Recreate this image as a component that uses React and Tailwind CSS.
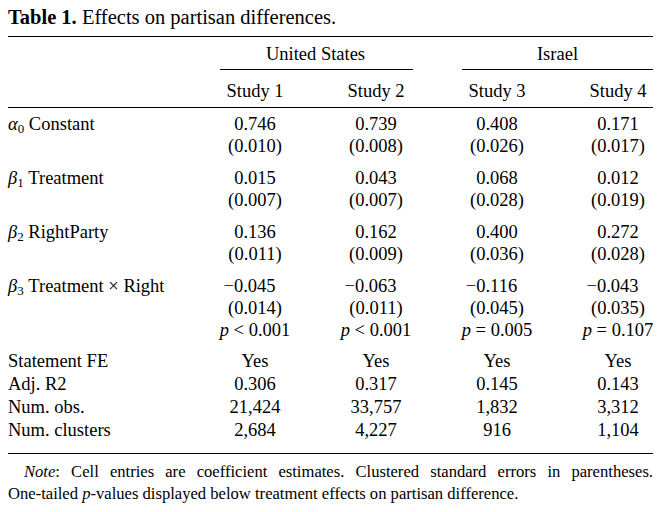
const grid = "grid grid-cols-[176px_100px_100px_100px_100px] gap-x-[21px]";

const Num = ({ v }) => {
  if (typeof v === "string" && v.startsWith("−")) {
    return <div className="text-center pr-[11px]">{v}</div>;
  }
  return <div className="text-center">{v}</div>;
};

const P = ({ op, v }) => (
  <span>
    <i>p</i> {op} {v}
  </span>
);

const Sym = ({ ch, sub }) => (
  <>
    <i>{ch}</i>
    <sub className="text-[13px]">{sub}</sub>
  </>
);

const coefs = [
  {
    label: <><Sym ch="α" sub="0" /> Constant</>,
    lines: [
      ["0.746", "0.739", "0.408", "0.171"],
      ["(0.010)", "(0.008)", "(0.026)", "(0.017)"],
    ],
  },
  {
    label: <><Sym ch="β" sub="1" /> Treatment</>,
    lines: [
      ["0.015", "0.043", "0.068", "0.012"],
      ["(0.007)", "(0.007)", "(0.028)", "(0.019)"],
    ],
  },
  {
    label: <><Sym ch="β" sub="2" /> RightParty</>,
    lines: [
      ["0.136", "0.162", "0.400", "0.272"],
      ["(0.011)", "(0.009)", "(0.036)", "(0.028)"],
    ],
  },
  {
    label: <><Sym ch="β" sub="3" /> Treatment × Right</>,
    lines: [
      ["−0.045", "−0.063", "−0.116", "−0.043"],
      ["(0.014)", "(0.011)", "(0.045)", "(0.035)"],
      [
        <P op="<" v="0.001" />,
        <P op="<" v="0.001" />,
        <P op="=" v="0.005" />,
        <P op="=" v="0.107" />,
      ],
    ],
  },
];

const stats = [
  ["Statement FE", "Yes", "Yes", "Yes", "Yes"],
  ["Adj. R2", "0.306", "0.317", "0.145", "0.143"],
  ["Num. obs.", "21,424", "33,757", "1,832", "3,312"],
  ["Num. clusters", "2,684", "4,227", "916", "1,104"],
];

export default function App() {
  return (
    <div className="min-h-[512px] bg-white text-black pl-[8px] pt-[5px] font-['Liberation_Serif','Times_New_Roman',serif]">
      <h1 className="text-[20.5px] leading-[24px]">
        <b>Table 1.</b> Effects on partisan differences.
      </h1>

      <div className="w-[645px] h-px bg-black mt-[7px]" />

      {/* column spanners */}
      <div className={`${grid} text-[18.5px] leading-[22px] mt-[6px]`}>
        <div />
        <div className="col-span-2 flex flex-col items-center">
          <div>United States</div>
          <div className="h-px bg-black self-stretch ml-[15px] mr-[13px] mt-[4px]" />
        </div>
        <div className="col-span-2 flex flex-col items-center">
          <div>Israel</div>
          <div className="h-px bg-black self-stretch ml-[15px] mr-[15px] mt-[4px]" />
        </div>
      </div>

      <div className={`${grid} text-[18.5px] leading-[22px] mt-[10px]`}>
        <div />
        <Num v="Study 1" />
        <Num v="Study 2" />
        <Num v="Study 3" />
        <Num v="Study 4" />
      </div>

      <div className="w-[645px] h-px bg-black mt-[5px]" />

      {/* coefficients */}
      <div className="flex flex-col gap-[10px] mt-[5px] text-[18.5px] leading-[22px]">
        {coefs.map((c, i) => (
          <div key={i} className={grid}>
            <div className="whitespace-nowrap">{c.label}</div>
            {[0, 1, 2, 3].map((k) => (
              <div key={k} className="flex flex-col">
                {c.lines.map((ln, j) => (
                  <Num key={j} v={ln[k]} />
                ))}
              </div>
            ))}
          </div>
        ))}
      </div>

      {/* fit statistics */}
      <div className="flex flex-col mt-[9px] text-[18.5px] leading-[23px]">
        {stats.map((r) => (
          <div key={r[0]} className={grid}>
            <div>{r[0]}</div>
            {r.slice(1).map((v, k) => (
              <Num key={k} v={v} />
            ))}
          </div>
        ))}
      </div>

      <div className="w-[645px] h-px bg-black mt-[11px]" />

      <div className="w-[645px] mt-[7px] text-[16.6px] leading-[22px]">
        <p className="text-justify [text-align-last:justify] indent-[16px]">
          <i>Note</i>: Cell entries are coefficient estimates. Clustered standard errors in parentheses.
        </p>
        <p>
          One-tailed <i>p</i>-values displayed below treatment effects on partisan difference.
        </p>
      </div>
    </div>
  );
}
